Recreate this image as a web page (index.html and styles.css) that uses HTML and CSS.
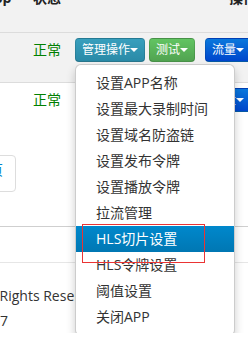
FILE: index.html
```html
<!DOCTYPE html>
<html lang="zh-CN">
<head>
<meta charset="utf-8">
<title>App管理</title>
<link rel="stylesheet" href="styles.css">
</head>
<body>
<div class="page">
  <div class="row head">
    <div class="cell c1">App</div>
    <div class="cell">状态</div>
    <div class="cell c3">操作</div>
  </div>
  <div class="row item odd">
    <div class="cell"></div>
    <div class="cell status">正常</div>
    <div class="cell ops">
      <div class="group">
        <button class="btn info">管理操作<span class="caret"></span></button>
        <div class="menu">
          <a class="mi">设置APP名称</a>
          <a class="mi">设置最大录制时间</a>
          <a class="mi">设置域名防盗链</a>
          <a class="mi">设置发布令牌</a>
          <a class="mi">设置播放令牌</a>
          <a class="mi">拉流管理</a>
          <a class="mi active">HLS切片设置</a>
          <a class="mi">HLS令牌设置</a>
          <a class="mi">阈值设置</a>
          <a class="mi">关闭APP</a>
          <div class="mark"></div>
        </div>
      </div>
      <button class="btn success">测试<span class="caret"></span></button>
      <button class="btn primary">流量<span class="caret"></span></button>
    </div>
  </div>
  <div class="row item">
    <div class="cell"></div>
    <div class="cell status">正常</div>
    <div class="cell ops">
      <div class="group">
        <button class="btn info">管理操作<span class="caret"></span></button>
      </div>
      <button class="btn success">测试<span class="caret"></span></button>
      <button class="btn primary">流量<span class="caret"></span></button>
    </div>
  </div>
  <div class="pager"><a class="pg">末页</a></div>
  <div class="band"></div>
  <div class="footer">
    <p class="f1">All Rights Reserved</p>
    <p class="f2">2017</p>
  </div>
</div>
</body>
</html>
```

FILE: styles.css
```css
html, body {
  margin: 0;
  padding: 0;
  overflow: hidden;
  background: #fff;
}
body {
  font-family: "Open Sans", "Noto Sans CJK SC", sans-serif;
  font-size: 14px;
  color: #333;
}
.page {
  margin: -12px 0 0 -27px;
  width: 600px;
}
.row {
  display: grid;
  grid-template-columns: 52px 42px 352px;
}
.cell {
  white-space: nowrap;
  box-sizing: border-box;
}
.head {
  height: 44px;
  background: #f2f2f2;
  border-bottom: 1px solid #dcdcdc;
  font-weight: bold;
  line-height: 20px;
  color: #222;
}
.head .cell {
  padding: 0 8px;
  height: 20px;
}
.head .c1 {
  padding-left: 11px;
}
.head .c3 {
  text-align: center;
}
.item {
  height: 49px;
}
.item .cell {
  padding: 5px 8px;
}
.odd {
  background: #f2f2f2;
  border-bottom: 1px solid #dcdcdc;
}
.status {
  color: #008000;
  line-height: 24px;
}
.ops {
  display: flex;
  align-items: flex-start;
}
.group {
  position: relative;
  display: flex;
  margin-right: 4px;
}
.btn {
  appearance: none;
  margin: 0;
  display: flex;
  align-items: center;
  box-sizing: border-box;
  height: 24px;
  padding: 0 6px;
  font-family: "Open Sans", "Noto Sans CJK SC", sans-serif;
  font-size: 12px;
  line-height: 22px;
  color: #fff;
  border: 1px solid rgba(0, 0, 0, 0.12);
  border-bottom-color: rgba(0, 0, 0, 0.25);
  border-radius: 4px;
  cursor: pointer;
}
.success {
  margin-right: 10px;
}
.caret {
  width: 0;
  height: 0;
  border-top: 4px solid #fff;
  border-left: 4px solid transparent;
  border-right: 4px solid transparent;
}
.info {
  background: linear-gradient(#389fbd, #2a8aa7);
}
.success {
  background: linear-gradient(#62c462, #51a351);
}
.primary {
  background: linear-gradient(#0a78dc, #0046cc);
}
.menu {
  position: absolute;
  top: 100%;
  left: 0;
  z-index: 10;
  margin-top: 2px;
  width: 160px;
  box-sizing: border-box;
  padding: 5px 0;
  background: #fff;
  border: 1px solid rgba(0, 0, 0, 0.2);
  border-radius: 6px;
  box-shadow: 0 5px 10px rgba(0, 0, 0, 0.2);
  display: flex;
  flex-direction: column;
}
.mi {
  display: block;
  box-sizing: border-box;
  height: 26px;
  overflow: hidden;
  padding: 3px 20px;
  line-height: 20px;
  font-size: 14px;
  color: #333;
  white-space: nowrap;
}
.mi.active {
  color: #fff;
  background: linear-gradient(#0088cc, #0077b3);
}
.mark {
  position: absolute;
  left: 6px;
  top: 159px;
  width: 123px;
  height: 39px;
  box-sizing: border-box;
  border: 1px solid #ea3434;
}
.pager {
  margin-top: 23px;
  display: flex;
}
.pg {
  margin-left: -11px;
  padding: 4px 12px;
  line-height: 19px;
  height: 27px;
  box-sizing: content-box;
  border: 1px solid #ddd;
  border-radius: 4px;
  color: #0088cc;
}
.band {
  margin-top: 34px;
  height: 35px;
  border-top: 1px solid #cfcfcf;
  border-bottom: 1px solid #e6e6e6;
}
.footer {
  padding-top: 20px;
  line-height: 25px;
  color: #333;
}
.footer p {
  margin: 0;
}
.f1 {
  padding-left: 7px;
}
.f2 {
  padding-left: 3px;
}
```
